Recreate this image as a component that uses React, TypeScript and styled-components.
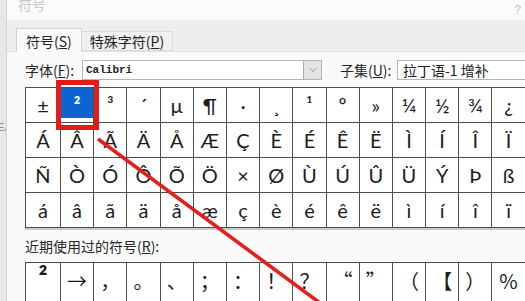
import React from 'react'
import styled, { createGlobalStyle } from 'styled-components'
import { ChevronDown } from 'lucide-react'

const GlobalStyle = createGlobalStyle`
  html, body {
    margin: 0;
    padding: 0;
    background: #fafafa;
  }
  body {
    font-family: "Noto Sans CJK SC", "Liberation Sans", sans-serif;
  }
`

const cjk = `"Noto Sans CJK SC", "Liberation Sans", sans-serif`
const symbolFont = `Lato, "Noto Sans", sans-serif`

const gridRow1 = ['±', '²', '³', '´', 'µ', '¶', '·', '¸', '¹', 'º', '»', '¼', '½', '¾', '¿', 'À']
const gridRow2 = ['Á', 'Â', 'Ã', 'Ä', 'Å', 'Æ', 'Ç', 'È', 'É', 'Ê', 'Ë', 'Ì', 'Í', 'Î', 'Ï', 'Ð']
const gridRow3 = ['Ñ', 'Ò', 'Ó', 'Ô', 'Õ', 'Ö', '×', 'Ø', 'Ù', 'Ú', 'Û', 'Ü', 'Ý', 'Þ', 'ß', 'à']
const gridRow4 = ['á', 'â', 'ã', 'ä', 'å', 'æ', 'ç', 'è', 'é', 'ê', 'ë', 'ì', 'í', 'î', 'ï', 'ð']
const recent = ['→', '，', '。', '、', '；', '：', '！', '？', '“', '”', '（', '【', '）', '%', '']

const Screen = styled.div`
  position: relative;
  width: 525px;
  height: 301px;
  overflow: hidden;
  display: flex;
  background: #fafafa;
`

const SideStrip = styled.div`
  flex: none;
  width: 6px;
  padding-top: 121px;
  background: #e7e7e7;
  border-right: 1px solid #d3d3d3;
  overflow: hidden;
  font-family: "Liberation Sans", sans-serif;
  font-size: 11px;
  color: #8a8a8a;
  white-space: nowrap;
  text-indent: -3px;
`

const Dialog = styled.div`
  flex: 1;
  min-width: 0;
  display: flex;
  flex-direction: column;
`

const TitleBar = styled.div`
  height: 20px;
  flex: none;
  display: flex;
  justify-content: space-between;
  align-items: flex-start;
  padding: 0 4px 0 11px;
  background: #fbfbfb;
  color: #c6c6c6;
`

const TitleText = styled.span`
  font-size: 14px;
  line-height: 14px;
  margin-top: -3px;
`

const HelpMark = styled.span`
  font-family: "Liberation Sans", sans-serif;
  font-size: 12px;
  margin-top: 3px;
`

const TabStrip = styled.div`
  height: 31px;
  flex: none;
  display: flex;
  align-items: flex-end;
  padding-left: 9px;
  background: #eeeeee;
  border-bottom: 1px solid #e2e2e2;
`

const Tab = styled.div<{ $active?: boolean }>`
  height: ${p => (p.$active ? 24 : 20)}px;
  margin-bottom: ${p => (p.$active ? -1 : 0)}px;
  padding: 0 ${p => (p.$active ? 9 : 8)}px;
  display: flex;
  align-items: center;
  font-size: 14px;
  color: #222;
  background: ${p => (p.$active ? '#fafafa' : '#f0f0f0')};
  border: 1px solid ${p => (p.$active ? '#d2d2d2' : '#dadada')};
  border-bottom: ${p => (p.$active ? 'none' : '1px solid #dadada')};
  border-left: ${p => (p.$active ? '1px solid #d2d2d2' : 'none')};
  box-sizing: border-box;
`

const Panel = styled.div`
  flex: 1;
  display: flex;
  flex-direction: column;
  padding: 8px 0 0 18px;
  background: #fafafa;
`

const FieldRow = styled.div`
  display: flex;
  align-items: center;
  height: 20px;
  white-space: nowrap;
`

const Label = styled.span<{ $width: number; $gap?: number }>`
  flex: none;
  width: ${p => p.$width}px;
  margin-left: ${p => p.$gap ?? 0}px;
  font-size: 14px;
  color: #262626;
`

const Combo = styled.div<{ $width: number }>`
  flex: none;
  width: ${p => p.$width}px;
  height: 20px;
  display: flex;
  box-sizing: border-box;
  border: 1px solid #b4b4b4;
  background: #fff;
`

const ComboText = styled.span<{ $mono?: boolean }>`
  flex: 1;
  display: flex;
  align-items: center;
  padding-left: ${p => (p.$mono ? 3 : 5)}px;
  font-family: ${p => (p.$mono ? `"Liberation Mono", monospace` : cjk)};
  font-size: ${p => (p.$mono ? 11 : 14)}px;
  font-weight: ${p => (p.$mono ? 'bold' : 'normal')};
  color: #222;
`

const DropButton = styled.span`
  flex: none;
  width: 17px;
  display: flex;
  align-items: center;
  justify-content: center;
  background: #e4e4e4;
  border-left: 1px solid #adadad;
  color: #777;
`

const SymbolGrid = styled.div`
  display: grid;
  grid-template-columns: 35px repeat(15, 33.2px);
  grid-auto-rows: 35px;
  width: max-content;
  border-top: 1px solid #4c4c4c;
  border-left: 1px solid #4c4c4c;
  background: #fff;
`

const MainGrid = styled(SymbolGrid)`
  margin-top: 7px;
  box-shadow: 0 2px 0 #c9c9c9;
`

const RecentGrid = styled(SymbolGrid)`
  margin-top: 6px;
  grid-auto-rows: 45px;
`

const Cell = styled.div<{ $selected?: boolean }>`
  display: flex;
  align-items: center;
  justify-content: center;
  box-sizing: border-box;
  border-right: 1px solid #4c4c4c;
  border-bottom: 1px solid #4c4c4c;
  font-family: ${symbolFont};
  font-size: 20px;
  font-weight: ${p => (p.$selected ? 'bold' : 'normal')};
  color: ${p => (p.$selected ? '#fff' : '#1c1c1c')};
  background: ${p => (p.$selected ? '#0c64d2' : '#fff')};
  box-shadow: ${p => (p.$selected ? 'inset 0 -4px 0 #fff' : 'none')};
`

const RecentCell = styled(Cell)`
  align-items: flex-start;
  padding-top: 5px;
  line-height: 26px;
  font-family: ${cjk};
`

const RecentSuper = styled(Cell)`
  align-items: flex-start;
  font-size: 27px;
  line-height: 30px;
  font-weight: bold;
`

const RecentLabel = styled.div`
  margin-top: 8px;
  height: 20px;
  font-size: 14px;
  line-height: 20px;
  color: #262626;
`

const Highlight = styled.div`
  position: absolute;
  left: 56px;
  top: 80px;
  width: 43px;
  height: 50px;
  box-sizing: border-box;
  border: 5px solid #e21c1a;
  pointer-events: none;
`

const Annotation = styled.svg`
  position: absolute;
  left: 0;
  top: 0;
  pointer-events: none;
`

export default function App() {
  const rows = [gridRow1, gridRow2, gridRow3, gridRow4]
  return (
    <Screen>
      <GlobalStyle />
      <SideStrip>EJ</SideStrip>
      <Dialog>
        <TitleBar>
          <TitleText>符号</TitleText>
          <HelpMark>?</HelpMark>
        </TitleBar>
        <TabStrip>
          <Tab $active>
            符号(<u>S</u>)
          </Tab>
          <Tab>
            特殊字符(<u>P</u>)
          </Tab>
        </TabStrip>
        <Panel>
          <FieldRow>
            <Label $width={57}>
              字体(<u>F</u>):
            </Label>
            <Combo $width={240}>
              <ComboText $mono>Calibri</ComboText>
              <DropButton>
                <ChevronDown size={12} strokeWidth={1.5} />
              </DropButton>
            </Combo>
            <Label $width={57} $gap={18}>
              子集(<u>U</u>):
            </Label>
            <Combo $width={160}>
              <ComboText>拉丁语-1 增补</ComboText>
            </Combo>
          </FieldRow>
          <MainGrid>
            {rows.map((row, r) =>
              row.map((ch, c) => (
                <Cell key={`${r}-${c}`} $selected={r === 0 && c === 1}>
                  {ch}
                </Cell>
              ))
            )}
          </MainGrid>
          <RecentLabel>
            近期使用过的符号(<u>R</u>):
          </RecentLabel>
          <RecentGrid>
            <RecentSuper>²</RecentSuper>
            {recent.map((ch, i) => (
              <RecentCell key={i}>{ch}</RecentCell>
            ))}
          </RecentGrid>
        </Panel>
      </Dialog>
      <Highlight />
      <Annotation width={525} height={301} viewBox="0 0 525 301">
        <line x1={98} y1={139} x2={320} y2={303} stroke="#e3201c" strokeWidth={3.6} />
      </Annotation>
    </Screen>
  )
}
